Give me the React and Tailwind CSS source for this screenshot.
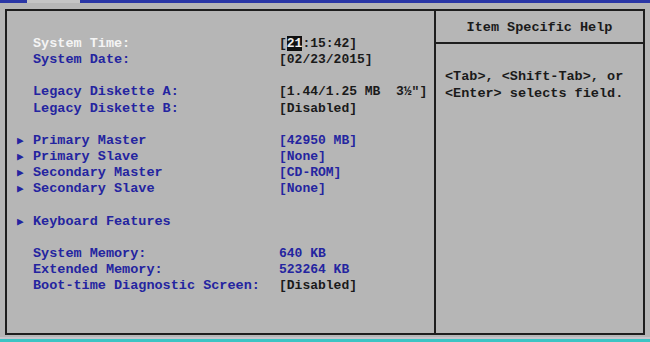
const rows = [
  { label: "System Time:", value: "time", hi: true },
  { label: "System Date:", value: "[02/23/2015]" },
  null,
  { label: "Legacy Diskette A:", value: "[1.44/1.25 MB  3½\"]" },
  { label: "Legacy Diskette B:", value: "[Disabled]" },
  null,
  { label: "Primary Master", value: "[42950 MB]", sub: true, blue: true },
  { label: "Primary Slave", value: "[None]", sub: true, blue: true },
  { label: "Secondary Master", value: "[CD-ROM]", sub: true, blue: true },
  { label: "Secondary Slave", value: "[None]", sub: true, blue: true },
  null,
  { label: "Keyboard Features", value: "", sub: true },
  null,
  { label: "System Memory:", value: "640 KB", blue: true },
  { label: "Extended Memory:", value: "523264 KB", blue: true },
  { label: "Boot-time Diagnostic Screen:", value: "[Disabled]" },
];

function Row({ row }) {
  if (!row) return <div className="h-[16.15px]" />;
  return (
    <div className="relative flex h-[16.15px] items-center">
      {row.sub && (
        <span className="absolute left-[-16px] text-[11px] text-[#2424a0]">▶</span>
      )}
      <span
        className={`w-[246px] shrink-0 whitespace-pre ${
          row.hi ? "text-[#f4f4f4]" : "text-[#2424a0]"
        }`}
      >
        {row.label}
      </span>
      {row.value === "time" ? (
        <span className="whitespace-pre text-[13px] text-[#1a1a1a]">
          [<span className="bg-[#111] text-[#eee]">21</span>:15:42]
        </span>
      ) : (
        <span
          className={`whitespace-pre text-[13px] ${
            row.blue ? "text-[#2424a0]" : "text-[#1a1a1a]"
          }`}
        >
          {row.value}
        </span>
      )}
    </div>
  );
}

export default function App() {
  return (
    <div className="flex h-[342px] w-[650px] flex-col overflow-hidden bg-[#b6b6b6] font-['Liberation_Mono',monospace] text-[13.5px] font-bold leading-[16px]">
      <div className="flex h-[3px] shrink-0">
        <div className="w-[27px] bg-[#2a36a6]" />
        <div className="w-[53px] bg-[#c4c4c4]" />
        <div className="flex-1 bg-[#2a36a6]" />
      </div>
      <div className="ml-[5px] mr-[5px] mt-[6px] flex h-[326px] shrink-0 border-2 border-[#1e1e1e]">
        <div className="w-[427px] shrink-0 pl-[26px] pt-[25px]">
          {rows.map((r, i) => (
            <Row key={i} row={r} />
          ))}
        </div>
        <div className="flex flex-1 flex-col border-l-2 border-[#1e1e1e]">
          <div className="flex h-[33px] items-center justify-center border-b-2 border-[#1e1e1e] pt-[2px] text-[#1a1a1a]">
            Item Specific Help
          </div>
          <div className="pl-[9px] pt-[24px] leading-[17px] text-[#1a1a1a]">
            <div>&lt;Tab&gt;, &lt;Shift-Tab&gt;, or</div>
            <div>&lt;Enter&gt; selects field.</div>
          </div>
        </div>
      </div>
      <div className="mt-[2px] h-[2px] shrink-0 bg-[#c8c4cc]" />
      <div className="flex-1 bg-[#3cc4c4]" />
    </div>
  );
}
